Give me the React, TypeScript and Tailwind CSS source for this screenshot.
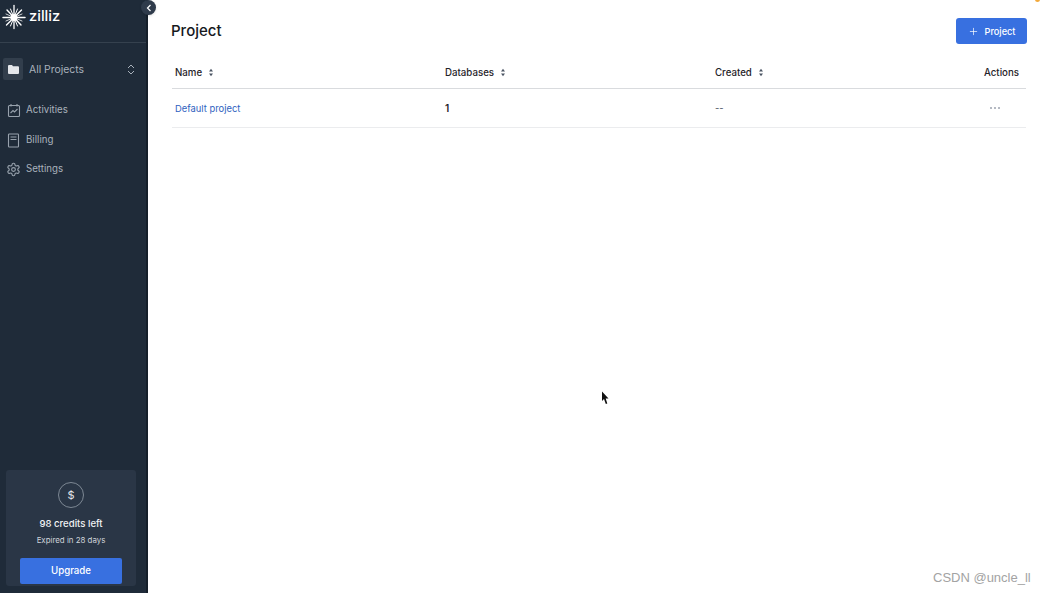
import { Plus } from "lucide-react";

const SortIcon = () => (
  <svg width="6" height="9" viewBox="0 0 6 9" className="ml-[6px]">
    <path d="M3 0.8 L5 3.4 H1 Z M3 8.2 L5 5.6 H1 Z" fill="#4b5563" />
  </svg>
);

const Logo = () => (
  <svg width="24" height="26" viewBox="0 0 24 26" fill="none" stroke="white" strokeLinecap="round">
    <path d="M12 1.5 V24.5" strokeWidth="1.3" />
    <path d="M1 13.5 H23" strokeWidth="1.5" />
    <path d="M5 6 L19 21" strokeWidth="1.4" />
    <path d="M19.5 6 L4.5 21" strokeWidth="1.4" />
    <path d="M8.5 5 L15.5 22" strokeWidth="1" />
    <path d="M15.5 5 L8.5 22" strokeWidth="1" />
    <path d="M4 10 L20 17" strokeWidth="0.8" />
    <path d="M20 10 L4 17" strokeWidth="0.8" />
    <circle cx="12" cy="13.5" r="3.4" fill="white" stroke="none" />
  </svg>
);

const ActivitiesIcon = () => (
  <svg width="14" height="15" viewBox="0 0 14 15" fill="none" stroke="#98a2ad" strokeWidth="1.1">
    <rect x="1.5" y="2.5" width="11" height="11" rx="1" />
    <path d="M4 1 V3.5 M10 1 V3.5" />
    <path d="M3.5 10 L6 7.5 L7.5 9 L10.5 6" />
  </svg>
);

const BillingIcon = () => (
  <svg width="13" height="15" viewBox="0 0 13 15" fill="none" stroke="#98a2ad" strokeWidth="1.1">
    <rect x="1.5" y="1" width="10" height="13" rx="0.8" />
    <path d="M3.5 4 H9.5 M3.5 6.5 H9.5" />
  </svg>
);

const SettingsIcon = () => (
  <svg width="15" height="15" viewBox="0 0 24 24" fill="none" stroke="#98a2ad" strokeWidth="1.8" strokeLinecap="round" strokeLinejoin="round">
    <path d="M12.22 2h-.44a2 2 0 0 0-2 2v.18a2 2 0 0 1-1 1.73l-.43.25a2 2 0 0 1-2 0l-.15-.08a2 2 0 0 0-2.73.73l-.22.38a2 2 0 0 0 .73 2.73l.15.1a2 2 0 0 1 1 1.72v.51a2 2 0 0 1-1 1.74l-.15.09a2 2 0 0 0-.73 2.73l.22.38a2 2 0 0 0 2.73.73l.15-.08a2 2 0 0 1 2 0l.43.25a2 2 0 0 1 1 1.73V20a2 2 0 0 0 2 2h.44a2 2 0 0 0 2-2v-.18a2 2 0 0 1 1-1.73l.43-.25a2 2 0 0 1 2 0l.15.08a2 2 0 0 0 2.73-.73l.22-.39a2 2 0 0 0-.73-2.73l-.15-.08a2 2 0 0 1-1-1.74v-.5a2 2 0 0 1 1-1.74l.15-.09a2 2 0 0 0 .73-2.73l-.22-.38a2 2 0 0 0-2.73-.73l-.15.08a2 2 0 0 1-2 0l-.43-.25a2 2 0 0 1-1-1.73V4a2 2 0 0 0-2-2z" />
    <circle cx="12" cy="12" r="3" />
  </svg>
);

const NavItem = ({ icon, label }: { icon: React.ReactNode; label: string }) => (
  <div className="flex h-[29.5px] items-center">
    <div className="flex w-[26px] justify-center pl-[1px]">{icon}</div>
    <span className="text-[9.7px] text-[#a9b2bc]">{label}</span>
  </div>
);

const columns = "grid grid-cols-[270px_270px_1fr_auto] items-center pl-[3px] pr-[7px]";

export default function App() {
  return (
    <div
      className="relative flex h-[593px] w-[1046px] overflow-hidden bg-white"
      style={{ fontFamily: "Inter, 'Noto Sans', sans-serif" }}
    >
      <aside className="flex w-[148px] shrink-0 flex-col border-r-2 border-[#151f2a] bg-[#1f2b39]">
        <div className="flex h-[43px] items-center gap-[3px] border-b border-[#35414e] pb-[9px] pl-[2px]">
          <Logo />
          <span className="text-[14.7px] font-medium leading-none text-white">zilliz</span>
        </div>
        <div className="mt-[15px] flex h-[22px] items-center pl-[3px] pr-[11px]">
          <div className="flex h-[22px] w-[20px] items-center justify-center rounded-[2px] bg-[#323e4c]">
            <svg width="11" height="9" viewBox="0 0 11 9">
              <path d="M0 1 A1 1 0 0 1 1 0 H4 L5 1.3 H10 A1 1 0 0 1 11 2.3 V8 A1 1 0 0 1 10 9 H1 A1 1 0 0 1 0 8 Z" fill="#e5e7eb" />
            </svg>
          </div>
          <span className="ml-[6px] flex-1 pt-[2px] text-[10.4px] text-[#a9b2bc]">All Projects</span>
          <svg width="8" height="11" viewBox="0 0 8 11" fill="none" stroke="#a9b2bc" strokeWidth="1">
            <path d="M1 4 L4 1 L7 4 M1 7 L4 10 L7 7" />
          </svg>
        </div>
        <nav className="mt-[16px] flex flex-col">
          <NavItem icon={<ActivitiesIcon />} label="Activities" />
          <NavItem icon={<BillingIcon />} label="Billing" />
          <NavItem icon={<SettingsIcon />} label="Settings" />
        </nav>
        <div className="mb-[7px] ml-[6px] mr-[10px] mt-auto flex h-[116px] flex-col items-center rounded-[3px] bg-[#2a3646] pt-[12px]">
          <div className="flex h-[26px] w-[26px] items-center justify-center rounded-full border border-[#7d8894] text-[11px] text-[#e5e7eb]">
            $
          </div>
          <div className="mt-[9px] text-[9.6px] font-medium leading-[14px] text-[#f1f3f5]">98 credits left</div>
          <div className="mt-[3px] text-[7.9px] leading-[12px] text-[#cfd4da]">Expired in 28 days</div>
          <div className="mt-[12px] flex h-[26px] w-[102px] items-center justify-center rounded-[2px] bg-[#3870e0] text-[9.7px] font-medium text-white">
            Upgrade
          </div>
        </div>
      </aside>

      <main className="flex min-w-0 flex-1 flex-col pl-[24px] pr-[20px]">
        <div className="flex h-[56px] items-center justify-between pt-[6px]">
          <h1 className="-ml-[1px] mt-[1px] text-[15px] font-medium text-[#16191d]">Project</h1>
          <div className="-mr-[1px] flex h-[26px] w-[71px] items-center justify-center gap-[6px] rounded-[3px] bg-[#3870e0] text-[9.2px] font-medium text-white">
            <Plus size={11} strokeWidth={1.5} />
            <span className="pt-[1px]">Project</span>
          </div>
        </div>
        <div className={`${columns} h-[33px] border-b border-[#d9dbde] pt-[2px] text-[9.7px] font-medium text-[#1f2329]`}>
          <div className="flex items-center">Name<SortIcon /></div>
          <div className="flex items-center">Databases<SortIcon /></div>
          <div className="flex items-center">Created<SortIcon /></div>
          <div>Actions</div>
        </div>
        <div className={`${columns} h-[39px] border-b border-[#ebecee] text-[9.4px]`}>
          <div className="pt-[2px] text-[#2f62c0]">Default project</div>
          <div className="text-[10px] font-semibold text-[#1f2329]">1</div>
          <div className="text-[#4b5563]">--</div>
          <div className="flex justify-end gap-[2px] pr-[19px]">
            <span className="h-[2px] w-[2px] rounded-full bg-[#9ca3af]" />
            <span className="h-[2px] w-[2px] rounded-full bg-[#9ca3af]" />
            <span className="h-[2px] w-[2px] rounded-full bg-[#9ca3af]" />
          </div>
        </div>
      </main>

      <div className="absolute left-[141px] top-0 flex h-[15px] w-[15px] items-center justify-center rounded-full bg-[#2f3b4b] shadow">
        <svg width="6" height="8" viewBox="0 0 6 8" fill="none" stroke="white" strokeWidth="1.2">
          <path d="M4.5 1 L1.5 4 L4.5 7" />
        </svg>
      </div>
      <div className="absolute right-[6px] top-[-3px] h-[5px] w-[5px] rounded-full bg-[#f2a93b]" />
      <svg className="absolute left-[601px] top-[391px]" width="9" height="14" viewBox="0 0 9 14">
        <path d="M1 0.5 V10 L3 8 L4.8 13 L6.3 12.4 L4.7 7.6 H7.5 Z" fill="#111" />
      </svg>
      <div
        className="absolute left-[933px] top-[568px] text-[13px] text-[#a3a3a3]"
        style={{ fontFamily: "'Liberation Sans', sans-serif" }}
      >
        CSDN @uncle_ll
      </div>
    </div>
  );
}
